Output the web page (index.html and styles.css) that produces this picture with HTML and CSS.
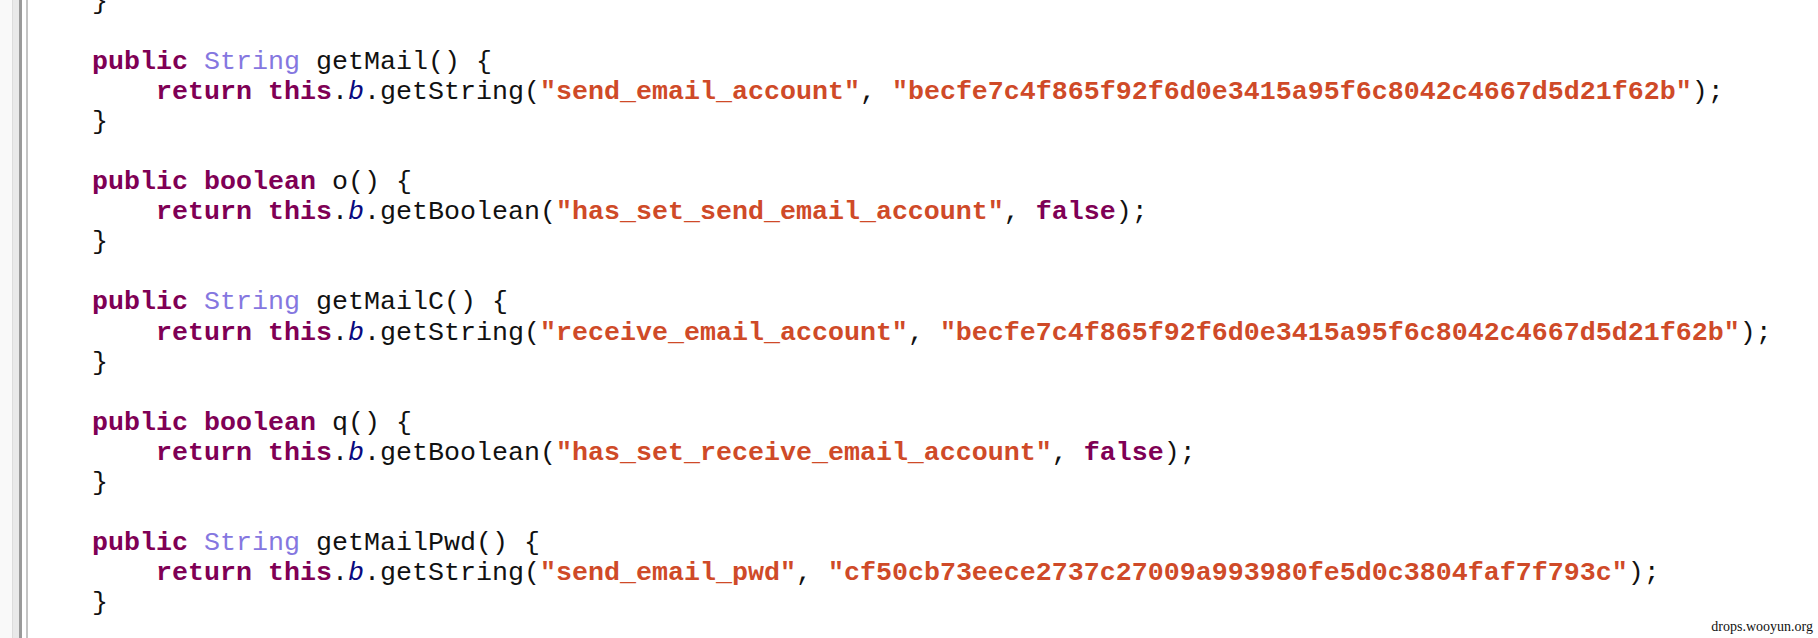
FILE: index.html
```html
<!DOCTYPE html>
<html>
<head>
<meta charset="utf-8">
<link rel="stylesheet" href="styles.css">
</head>
<body>
<div class="editor">
  <div class="gutter"></div>
  <pre class="code">}

<span class="kw">public</span> <span class="ty">String</span> getMail() {
    <span class="kw">return</span> <span class="kw">this</span>.<span class="fld">b</span>.getString(<span class="str">"send_email_account"</span>, <span class="str">"becfe7c4f865f92f6d0e3415a95f6c8042c4667d5d21f62b"</span>);
}

<span class="kw">public</span> <span class="kw">boolean</span> o() {
    <span class="kw">return</span> <span class="kw">this</span>.<span class="fld">b</span>.getBoolean(<span class="str">"has_set_send_email_account"</span>, <span class="kw">false</span>);
}

<span class="kw">public</span> <span class="ty">String</span> getMailC() {
    <span class="kw">return</span> <span class="kw">this</span>.<span class="fld">b</span>.getString(<span class="str">"receive_email_account"</span>, <span class="str">"becfe7c4f865f92f6d0e3415a95f6c8042c4667d5d21f62b"</span>);
}

<span class="kw">public</span> <span class="kw">boolean</span> q() {
    <span class="kw">return</span> <span class="kw">this</span>.<span class="fld">b</span>.getBoolean(<span class="str">"has_set_receive_email_account"</span>, <span class="kw">false</span>);
}

<span class="kw">public</span> <span class="ty">String</span> getMailPwd() {
    <span class="kw">return</span> <span class="kw">this</span>.<span class="fld">b</span>.getString(<span class="str">"send_email_pwd"</span>, <span class="str">"cf50cb73eece2737c27009a993980fe5d0c3804faf7f793c"</span>);
}</pre>
  <div class="watermark">drops.wooyun.org</div>
</div>
</body>
</html>
```
FILE: styles.css
```css
html, body {
  margin: 0;
  padding: 0;
  background: #ffffff;
}

.editor {
  position: relative;
  display: flex;
  height: 638px;
  overflow: hidden;
  background: #ffffff;
}

.gutter {
  flex: 0 0 28px;
  background: linear-gradient(to right,
    #f9f9f9 0, #f9f9f9 12px,
    #dcdcdc 12px, #dcdcdc 13px,
    #e9e9e9 13px, #e9e9e9 19px,
    #9a9a9a 19px, #9a9a9a 22px,
    #ffffff 22px, #ffffff 26px,
    #c4c4c4 26px, #c4c4c4 28px);
}

.code {
  margin: -13px 0 0 0;
  padding: 0 0 0 64px;
  font-family: "Liberation Mono", "Courier New", monospace;
  font-size: 26.67px;
  line-height: 30.05px;
  color: #111111;
  white-space: pre;
}

.kw {
  color: #7f0055;
  font-weight: bold;
}

.ty {
  color: #8577e0;
}

.str {
  color: #cf4a28;
  font-weight: bold;
}

.fld {
  color: #0a0a80;
  font-style: italic;
}

.watermark {
  position: absolute;
  right: 5px;
  bottom: 3px;
  font-family: "Liberation Serif", "Times New Roman", serif;
  font-size: 14px;
  line-height: 16px;
  color: #111111;
}
```
